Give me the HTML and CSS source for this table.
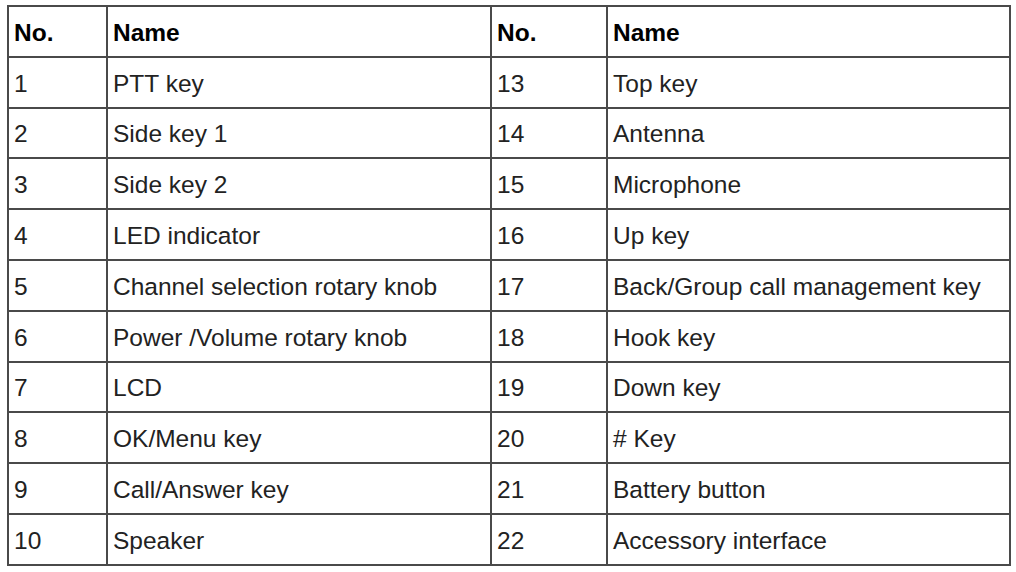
FILE: index.html
```html
<!DOCTYPE html>
<html>
<head>
<meta charset="utf-8">
<link rel="stylesheet" href="styles.css">
</head>
<body>
<table class="parts">
  <colgroup>
    <col class="c-no"><col class="c-name"><col class="c-no2"><col class="c-name2">
  </colgroup>
  <thead>
    <tr><th>No.</th><th>Name</th><th>No.</th><th>Name</th></tr>
  </thead>
  <tbody>
    <tr><td>1</td><td>PTT key</td><td>13</td><td>Top key</td></tr>
    <tr><td>2</td><td>Side key 1</td><td>14</td><td>Antenna</td></tr>
    <tr><td>3</td><td>Side key 2</td><td>15</td><td>Microphone</td></tr>
    <tr><td>4</td><td>LED indicator</td><td>16</td><td>Up key</td></tr>
    <tr><td>5</td><td>Channel selection rotary knob</td><td>17</td><td>Back/Group call management key</td></tr>
    <tr><td>6</td><td>Power /Volume rotary knob</td><td>18</td><td>Hook key</td></tr>
    <tr><td>7</td><td>LCD</td><td>19</td><td>Down key</td></tr>
    <tr><td>8</td><td>OK/Menu key</td><td>20</td><td># Key</td></tr>
    <tr><td>9</td><td>Call/Answer key</td><td>21</td><td>Battery button</td></tr>
    <tr><td>10</td><td>Speaker</td><td>22</td><td>Accessory interface</td></tr>
  </tbody>
</table>
</body>
</html>
```
FILE: styles.css
```css
html, body {
  margin: 0;
  padding: 0;
  background: #ffffff;
}
body {
  font-family: "Liberation Sans", Arial, sans-serif;
  color: #222222;
}
.parts {
  margin: 5px 0 0 7px;
  border-collapse: collapse;
  table-layout: fixed;
  width: 1002px;
}
.c-no { width: 99px; }
.c-name { width: 384px; }
.c-no2 { width: 116px; }
.c-name2 { width: 403px; }
.parts th,
.parts td {
  border: 2px solid #4a4a4a;
  height: 45.8px;
  padding: 3px 0 0 5px;
  text-align: left;
  vertical-align: middle;
  font-size: 24.5px;
  white-space: nowrap;
}
.parts th {
  font-weight: bold;
  color: #000;
}
```
